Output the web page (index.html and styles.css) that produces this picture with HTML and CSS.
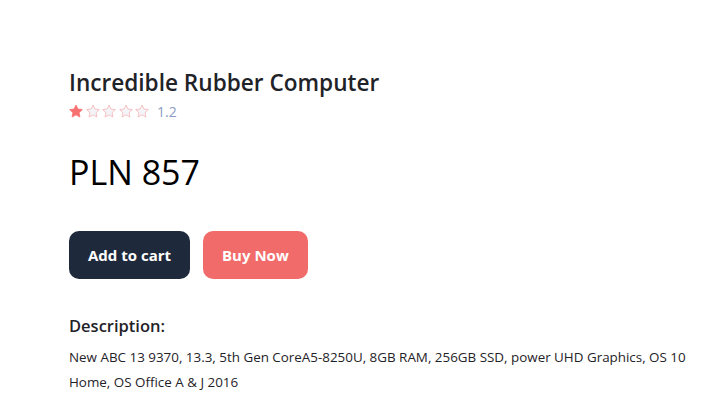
FILE: index.html
```html
<!DOCTYPE html>
<html>
<head>
<meta charset="utf-8">
<link rel="stylesheet" href="styles.css">
</head>
<body>
<main class="product">
  <h1 class="title">Incredible Rubber Computer</h1>
  <div class="rating">
    <span class="stars">
      <svg class="star full" viewBox="1.5 1.5 21 20"><path d="M12 2.5l2.9 6.1 6.6.8-4.9 4.6 1.3 6.6L12 17.3l-5.9 3.3 1.3-6.6-4.9-4.6 6.6-.8z"/></svg>
      <svg class="star empty" viewBox="1.5 1.5 21 20"><path d="M12 2.5l2.9 6.1 6.6.8-4.9 4.6 1.3 6.6L12 17.3l-5.9 3.3 1.3-6.6-4.9-4.6 6.6-.8z"/></svg>
      <svg class="star empty" viewBox="1.5 1.5 21 20"><path d="M12 2.5l2.9 6.1 6.6.8-4.9 4.6 1.3 6.6L12 17.3l-5.9 3.3 1.3-6.6-4.9-4.6 6.6-.8z"/></svg>
      <svg class="star empty" viewBox="1.5 1.5 21 20"><path d="M12 2.5l2.9 6.1 6.6.8-4.9 4.6 1.3 6.6L12 17.3l-5.9 3.3 1.3-6.6-4.9-4.6 6.6-.8z"/></svg>
      <svg class="star empty" viewBox="1.5 1.5 21 20"><path d="M12 2.5l2.9 6.1 6.6.8-4.9 4.6 1.3 6.6L12 17.3l-5.9 3.3 1.3-6.6-4.9-4.6 6.6-.8z"/></svg>
    </span>
    <span class="score">1.2</span>
  </div>
  <div class="price">PLN 857</div>
  <div class="actions">
    <button class="btn btn-dark">Add to cart</button>
    <button class="btn btn-red">Buy Now</button>
  </div>
  <h2 class="desc-title">Description:</h2>
  <p class="desc">New ABC 13 9370, 13.3, 5th Gen CoreA5-8250U, 8GB RAM, 256GB SSD, power UHD Graphics, OS 10 Home, OS Office A &amp; J 2016</p>
</main>
</body>
</html>
```
FILE: styles.css
```css
html, body {
  margin: 0;
  padding: 0;
  background: #ffffff;
}
body {
  font-family: "Open Sans", "Noto Sans", sans-serif;
  color: #1f2328;
}
.product {
  padding: 67px 20px 0 69px;
}
.title {
  margin: 0;
  font-size: 22.6px;
  font-weight: 600;
  line-height: 31px;
  color: #1f2328;
}
.rating {
  display: flex;
  align-items: center;
  gap: 8px;
  height: 20px;
  margin-top: 3px;
}
.stars {
  display: flex;
  gap: 2.5px;
}
.star {
  width: 14px;
  height: 14px;
  display: block;
}
.star.full path {
  fill: #f87171;
  stroke: #f87171;
  stroke-width: 1.2;
  stroke-linejoin: round;
}
.star.empty path {
  fill: #f3f4f8;
  stroke: #f8b4b4;
  stroke-width: 1.2;
  stroke-linejoin: round;
}
.score {
  font-size: 14px;
  color: #8a9cc4;
}
.price {
  margin-top: 29px;
  font-size: 34px;
  line-height: 44px;
  font-weight: 400;
  color: #000;
}
.actions {
  display: flex;
  gap: 13px;
  margin-top: 37px;
}
.btn {
  font-family: "Open Sans", "Noto Sans", sans-serif;
  font-size: 15px;
  font-weight: 700;
  color: #ffffff;
  border: none;
  border-radius: 10px;
  height: 48px;
  padding: 0 19px;
}
.btn-dark {
  background: #1e293b;
}
.btn-red {
  background: #f26b6b;
}
.desc-title {
  margin: 36px 0 0;
  font-size: 16.5px;
  font-weight: 600;
  line-height: 22px;
  color: #1f2328;
}
.desc {
  margin: 8px 0 0;
  font-size: 13.4px;
  line-height: 25px;
  color: #1f2328;
}
```
